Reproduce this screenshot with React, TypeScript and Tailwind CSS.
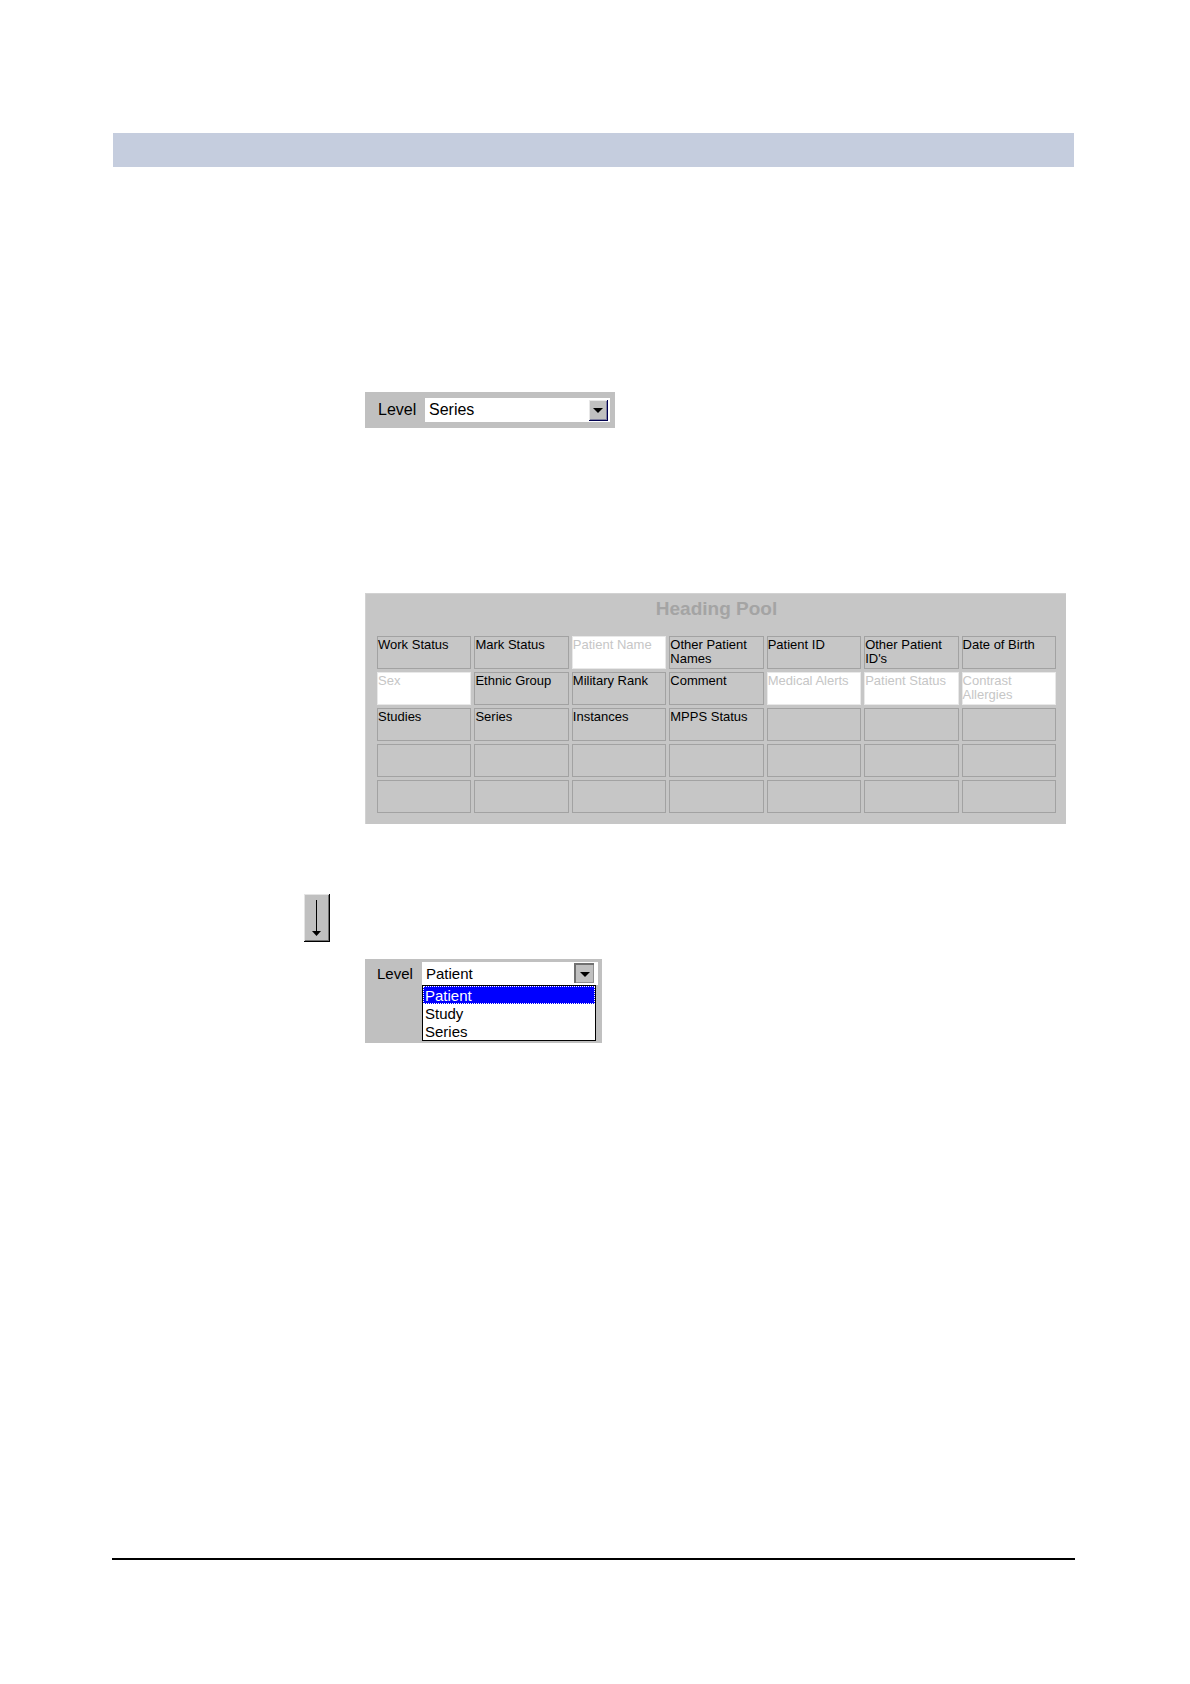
import React from 'react';

interface Heading {
  label: string;
  used?: boolean;
}

const levels = ['Patient', 'Study', 'Series'];

const headings: Heading[] = [
  { label: 'Work Status' },
  { label: 'Mark Status' },
  { label: 'Patient Name', used: true },
  { label: 'Other Patient Names' },
  { label: 'Patient ID' },
  { label: "Other Patient ID's" },
  { label: 'Date of Birth' },
  { label: 'Sex', used: true },
  { label: 'Ethnic Group' },
  { label: 'Military Rank' },
  { label: 'Comment' },
  { label: 'Medical Alerts', used: true },
  { label: 'Patient Status', used: true },
  { label: 'Contrast Allergies', used: true },
  { label: 'Studies' },
  { label: 'Series' },
  { label: 'Instances' },
  { label: 'MPPS Status' }
];

const slotCount = 35;

const Triangle: React.FC = () => (
  <svg width="10" height="5" viewBox="0 0 10 5" aria-hidden="true">
    <path d="M0 0H10L5 5Z" fill="#000" />
  </svg>
);

const LevelSelect: React.FC = () => (
  <div className="flex w-[250px] items-center bg-[#c0c0c0] py-[6px] pr-[5px] pl-[13px]">
    <label htmlFor="level" className="w-[47px] text-[16px] leading-[24px]">Level</label>
    <div className="relative flex-1">
      <select
        id="level"
        defaultValue="Series"
        className="block h-[24px] w-full appearance-none bg-white pl-[4px] text-[16px] leading-[24px] outline-none"
      >
        {levels.map((level) => (
          <option key={level}>{level}</option>
        ))}
      </select>
      <span className="pointer-events-none absolute top-[2px] right-[2px] flex h-[21px] w-[19px] items-center justify-center border-r border-b border-[#000050] bg-[#c0c0c0] shadow-[inset_1px_1px_0_#e8e8e8,inset_-1px_-1px_0_#8080a0]">
        <Triangle />
      </span>
    </div>
  </div>
);

const OpenLevelSelect: React.FC = () => (
  <div className="flex w-[237px] items-start bg-[#c0c0c0] pt-[3px] pr-[4px] pb-[2px] pl-[12px]">
    <label htmlFor="open-level" className="w-[45px] text-[15px] leading-[24px]">Level</label>
    <div className="flex-1">
      <div className="relative">
        <select
          id="open-level"
          defaultValue="Patient"
          className="block h-[23px] w-full appearance-none bg-white pl-[4px] text-[15px] leading-[23px] outline-none"
        >
          {levels.map((level) => (
            <option key={level}>{level}</option>
          ))}
        </select>
        <span className="pointer-events-none absolute top-[1px] right-[4px] flex h-[20px] w-[20px] items-center justify-center border-t-2 border-l-2 border-[#707070] bg-[#c0c0c0] shadow-[inset_-1px_-1px_0_#909090]">
          <Triangle />
        </span>
      </div>
      <ul role="listbox" aria-label="Level" className="mr-[2px] border border-black bg-white text-[15px] leading-[19px]">
        {levels.map((level, index) => (
          <li
            key={level}
            role="option"
            aria-selected={index === 0}
            className={`h-[18px] pl-[2px] ${
              index === 0 ? 'bg-[#0000ff] text-white outline-1 -outline-offset-1 outline-dotted outline-white' : 'text-black'
            }`}
          >
            {level}
          </li>
        ))}
      </ul>
    </div>
  </div>
);

const HeadingPool: React.FC = () => (
  <section className="bg-[#c6c6c6] pt-[4px] pr-[10px] pb-[11px] pl-[12px] shadow-[inset_1px_1px_0_#d2d2d2]">
    <h2 className="mb-[15px] text-center text-[19px] leading-[24px] font-bold text-[#a4a4a4]">Heading Pool</h2>
    <ul className="grid grid-cols-7 gap-[3px]">
      {Array.from({ length: slotCount }, (_, index) => {
        const heading = headings[index];
        return (
          <li
            key={index}
            className={`h-[33px] border pt-px text-[13px] leading-[14px] ${
              heading?.used
                ? 'border-[#e8e8e8] bg-white text-[#c6c6c6]'
                : 'border-[#a2a2a2] text-black'
            }`}
          >
            {heading?.label}
          </li>
        );
      })}
    </ul>
  </section>
);

const App: React.FC = () => {
  return (
    <div className="flex min-h-screen flex-col bg-white pt-[133px] pr-[115px] pb-[124px] pl-28 font-['Liberation_Sans',Arial,sans-serif] text-black">
      <header className="mx-px h-[34px] bg-[#c5cdde]" />

      <main className="pt-[225px] pr-[9px]">
        <div className="pl-[253px]">
          <LevelSelect />
        </div>

        <div className="mt-[165px] pl-[253px]">
          <HeadingPool />
        </div>

        <div className="mt-[70px] pl-48">
          <button
            type="button"
            aria-label="Move down"
            className="flex h-[48px] w-[26px] items-center justify-center border-r border-b border-black bg-[#c0c0c0] shadow-[inset_1px_1px_0_#e4e4e4,inset_-1px_-1px_0_#707070]"
          >
            <svg width="9" height="36" viewBox="0 0 9 36" aria-hidden="true">
              <path d="M4.5 0V33" stroke="#000" strokeWidth="1" />
              <path d="M0 31H9L4.5 36Z" fill="#000" />
            </svg>
          </button>
        </div>

        <div className="mt-[17px] pl-[253px]">
          <OpenLevelSelect />
        </div>
      </main>

      <footer className="mt-auto border-t-2 border-black" />
    </div>
  );
};

export default App;
